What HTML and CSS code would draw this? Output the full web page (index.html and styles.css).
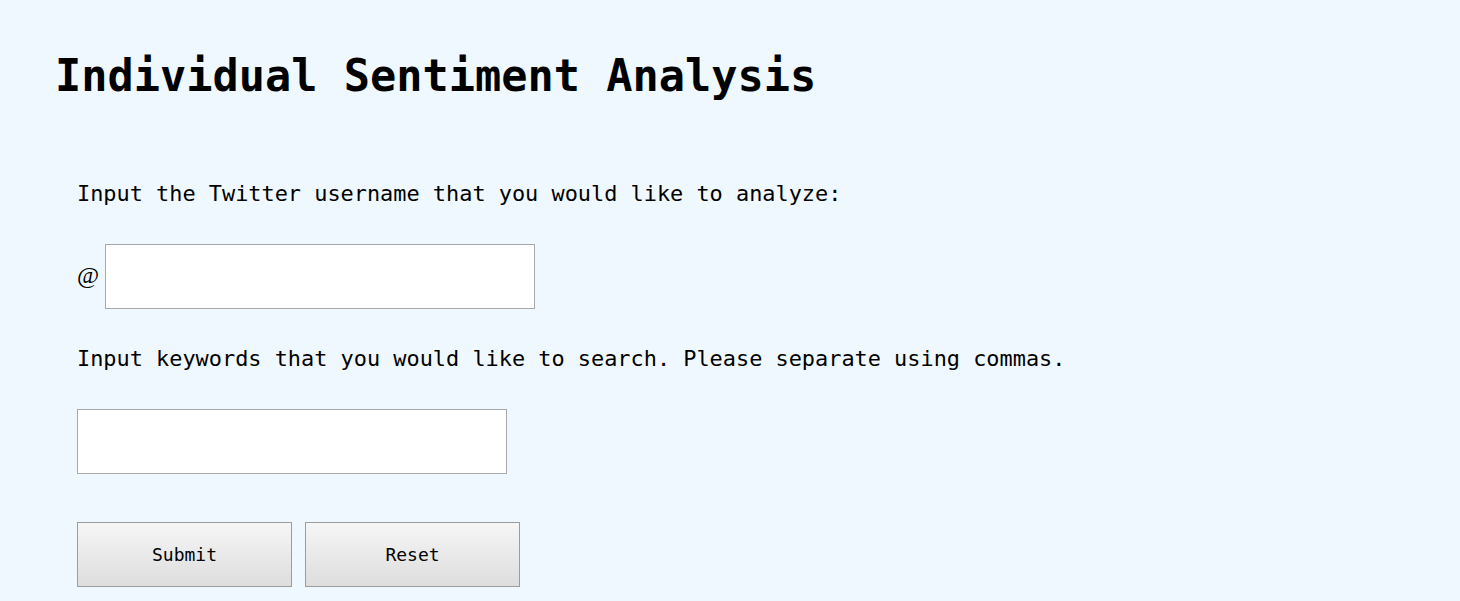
FILE: index.html
```html
<!DOCTYPE html>
<html>
<head>
<meta charset="utf-8">
<title>Individual Sentiment Analysis</title>
<link rel="stylesheet" href="styles.css">
</head>
<body>
<main class="page">
  <h1 class="title">Individual Sentiment Analysis</h1>
  <form class="form">
    <p class="label">Input the Twitter username that you would like to analyze:</p>
    <div class="user-row">
      <span class="at">@</span>
      <input class="field" type="text">
    </div>
    <p class="label">Input keywords that you would like to search. Please separate using commas.</p>
    <input class="field" type="text">
    <div class="buttons">
      <button class="btn" type="button">Submit</button>
      <button class="btn" type="reset">Reset</button>
    </div>
  </form>
</main>
</body>
</html>
```

FILE: styles.css
```css
html, body {
  margin: 0;
  padding: 0;
  background: #f0f8ff;
}
.page {
  padding: 50px 0 0 55px;
  font-family: "DejaVu Sans Mono", monospace;
  color: #000;
}
.title {
  margin: 0;
  font-size: 43.6px;
  line-height: 52px;
  font-weight: bold;
}
.form {
  display: flex;
  flex-direction: column;
  align-items: flex-start;
  gap: 37px;
  margin: 79px 0 0 22px;
}
.label {
  margin: 0;
  font-size: 21.9px;
  line-height: 26px;
}
.user-row {
  display: flex;
  align-items: center;
  gap: 6px;
}
.at {
  font-family: "Liberation Serif", serif;
  font-size: 24px;
  line-height: 26px;
  padding-bottom: 4px;
}
.field {
  box-sizing: border-box;
  width: 430px;
  height: 65px;
  margin: 0;
  border: 1px solid #a9a9a9;
  background: #fff;
  font-size: 18px;
  padding: 0 8px;
}
.buttons {
  display: flex;
  gap: 13px;
  margin-top: 11px;
}
.btn {
  box-sizing: border-box;
  width: 215px;
  height: 65px;
  margin: 0;
  border: 1px solid #9c9c9c;
  border-radius: 0;
  background: linear-gradient(#f6f6f6, #dddddd);
  font-family: "DejaVu Sans Mono", monospace;
  font-size: 18px;
  color: #000;
}
```
